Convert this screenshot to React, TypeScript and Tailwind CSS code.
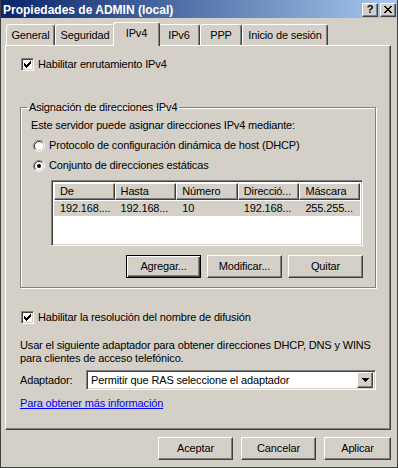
import React from "react";

const raised =
  "border-t border-l border-t-white border-l-white border-r border-b border-r-[#404040] border-b-[#404040] shadow-[inset_-1px_-1px_0_#808080]";
const sunken =
  "border border-t-[#808080] border-l-[#808080] border-b-white border-r-white shadow-[inset_1px_1px_0_#404040,inset_-1px_-1px_0_#d4d0c8]";

function CheckBox() {
  return (
    <div className={`w-[13px] h-[13px] bg-white shrink-0 flex items-center justify-center ${sunken}`}>
      <svg width="7" height="7" viewBox="0 0 7 7" shapeRendering="crispEdges">
        <rect x="6" y="0" width="1" height="1" fill="#000" />
        <rect x="5" y="1" width="2" height="1" fill="#000" />
        <rect x="0" y="2" width="1" height="1" fill="#000" />
        <rect x="4" y="2" width="3" height="1" fill="#000" />
        <rect x="0" y="3" width="2" height="1" fill="#000" />
        <rect x="3" y="3" width="3" height="1" fill="#000" />
        <rect x="0" y="4" width="5" height="1" fill="#000" />
        <rect x="1" y="5" width="3" height="1" fill="#000" />
        <rect x="2" y="6" width="1" height="1" fill="#000" />
      </svg>
    </div>
  );
}

function Radio({ checked }: { checked?: boolean }) {
  return (
    <svg width="12" height="12" viewBox="0 0 12 12" className="shrink-0">
      <circle cx="6" cy="6" r="4.5" fill="#fff" />
      <path d="M2.11 9.89 A5.5 5.5 0 0 1 9.89 2.11" stroke="#808080" fill="none" />
      <path d="M2.82 9.18 A4.5 4.5 0 0 1 9.18 2.82" stroke="#404040" fill="none" />
      <path d="M9.89 2.11 A5.5 5.5 0 0 1 2.11 9.89" stroke="#fff" fill="none" />
      <path d="M9.18 2.82 A4.5 4.5 0 0 1 2.82 9.18" stroke="#d4d0c8" fill="none" />
      {checked && <circle cx="6" cy="6" r="2" fill="#000" />}
    </svg>
  );
}

function Btn({ label, def, w = "w-[75px]" }: { label: string; def?: boolean; w?: string }) {
  if (def) {
    return (
      <div className={`${w} h-[23px] border border-black flex`}>
        <div className="flex-1 flex items-center justify-center shadow-[inset_1px_1px_0_#fff,inset_-1px_-1px_0_#404040,inset_-2px_-2px_0_#808080]">
          {label}
        </div>
      </div>
    );
  }
  return (
    <div className={`${w} h-[23px] flex items-center justify-center ${raised}`}>{label}</div>
  );
}

function Tab({ label, w, selected }: { label: string; w: string; selected?: boolean }) {
  if (selected) {
    return (
      <div className={`${w} h-[24px] -mx-[2px] -mb-[1px] relative z-10 bg-[#d4d0c8] rounded-t-[3px] border-t border-l border-t-white border-l-white border-r border-r-[#404040] shadow-[inset_-1px_0_0_#808080] flex items-center justify-center pb-[2px]`}>
        {label}
      </div>
    );
  }
  return (
    <div className={`${w} h-[21px] rounded-t-[3px] border-t border-l border-t-white border-l-white border-r border-r-[#404040] shadow-[inset_-1px_0_0_#808080] flex items-center justify-center`}>
      {label}
    </div>
  );
}

const cols = [
  { h: "De", v: "192.168....", w: "w-[61px]" },
  { h: "Hasta", v: "192.168...", w: "w-[62px]" },
  { h: "Número", v: "10", w: "w-[62px]" },
  { h: "Direcció...", v: "192.168...", w: "w-[62px]" },
  { h: "Máscara", v: "255.255...", w: "w-[61px]" },
];

export default function App() {
  return (
    <div className="w-[398px] h-[468px] bg-[#d4d0c8] border-l border-r border-b border-[#404040] flex flex-col font-['Liberation_Sans',sans-serif] text-[11px] leading-[13px] tracking-[-0.15px] text-black overflow-hidden">
      {/* Title bar */}
      <div className="h-[18px] shrink-0 bg-[linear-gradient(to_right,#0a246a,#a6caf0)] flex items-center pl-[2px] pr-[1px]">
        <div className="flex-1 text-white font-bold text-[12px] leading-[14px] pt-[1px] tracking-normal">Propiedades de ADMIN (local)</div>
        <div className="flex gap-[2px] mt-[1px]">
          <div className={`w-[16px] h-[14px] bg-[#d4d0c8] flex items-center justify-center font-bold text-[11px] leading-[11px] ${raised}`}>
            ?
          </div>
          <div className={`w-[16px] h-[14px] bg-[#d4d0c8] flex items-center justify-center ${raised}`}>
            <svg width="8" height="7" viewBox="0 0 8 7" shapeRendering="crispEdges">
              <path d="M0 0h2v1h-2zM6 0h2v1h-2zM1 1h2v1h-2zM5 1h2v1h-2zM2 2h4v1h-4zM3 3h2v1h-2zM2 4h4v1h-4zM1 5h2v1h-2zM5 5h2v1h-2zM0 6h2v1h-2zM6 6h2v1h-2z" fill="#000" />
            </svg>
          </div>
        </div>
      </div>

      {/* Tabs */}
      <div className="flex items-end pl-[5px] mt-[4px] h-[23px] shrink-0">
        <Tab label="General" w="w-[49px]" />
        <Tab label="Seguridad" w="w-[60px]" />
        <Tab label="IPv4" w="w-[47px]" selected />
        <Tab label="IPv6" w="w-[42px]" />
        <Tab label="PPP" w="w-[42px]" />
        <Tab label="Inicio de sesión" w="w-[86px]" />
      </div>

      {/* Panel */}
      <div className="ml-[4px] w-[386px] h-[385px] shrink-0 border-t border-l border-t-white border-l-white border-r border-b border-r-[#404040] border-b-[#404040] shadow-[inset_-1px_-1px_0_#808080] flex flex-col pl-[14px]">
        <div className="mt-[12px] flex items-center gap-[4px] pl-[1px] h-[13px]">
          <CheckBox />
          <span>Habilitar enrutamiento IPv4</span>
        </div>

        <fieldset className="mt-[30px] w-[356px] border border-[#808080] shadow-[1px_1px_0_#fff,inset_1px_1px_0_#fff] p-0 m-0">
          <legend className="ml-[6px] px-[2px] leading-[13px]">Asignación de direcciones IPv4</legend>
          <div className="flex flex-col pl-[10px] pr-[11px] pb-[9px]">
            <div className="mt-[5px] h-[13px]">Este servidor puede asignar direcciones IPv4 mediante:</div>
            <div className="mt-[7px] flex items-center gap-[4px] pl-[2px] h-[13px]">
              <Radio />
              <span>Protocolo de configuración dinámica de host (DHCP)</span>
            </div>
            <div className="mt-[7px] flex items-center gap-[4px] pl-[2px] h-[13px]">
              <Radio checked />
              <span>Conjunto de direcciones estáticas</span>
            </div>
            <div className={`mt-[8px] ml-[20px] w-[312px] h-[66px] bg-white flex flex-col p-[2px] ${sunken}`}>
              <div className="flex h-[17px] shrink-0">
                {cols.map((c) => (
                  <div key={c.h} className={`${c.w} h-[17px] bg-[#d4d0c8] flex items-center pl-[5px] ${raised}`}>
                    {c.h}
                  </div>
                ))}
              </div>
              <div className="flex h-[15px] bg-[#d4d0c8] mt-[1px]">
                {cols.map((c) => (
                  <div key={c.h} className={`${c.w} flex items-center pl-[6px]`}>
                    {c.v}
                  </div>
                ))}
              </div>
            </div>
            <div className="mt-[9px] flex justify-end gap-[6px] pr-[1px]">
              <Btn label="Agregar..." def />
              <Btn label="Modificar..." />
              <Btn label="Quitar" />
            </div>
          </div>
        </fieldset>

        <div className="mt-[23px] flex items-center gap-[4px] pl-[1px] h-[13px]">
          <CheckBox />
          <span>Habilitar la resolución del nombre de difusión</span>
        </div>

        <div className="mt-[15px] leading-[13px]">
          Usar el siguiente adaptador para obtener direcciones DHCP, DNS y WINS
          <br />
          para clientes de acceso telefónico.
        </div>

        <div className="mt-[5px] flex items-center h-[20px]">
          <span className="w-[66px]">Adaptador:</span>
          <div className={`w-[290px] h-[20px] bg-white flex items-center p-[2px] ${sunken}`}>
            <span className="flex-1 pl-[2px]">Permitir que RAS seleccione el adaptador</span>
            <div className={`w-[16px] h-[16px] bg-[#d4d0c8] flex items-center justify-center ${raised}`}>
              <svg width="7" height="4" viewBox="0 0 7 4" shapeRendering="crispEdges">
                <path d="M0 0h7v1h-7zM1 1h5v1h-5zM2 2h3v1h-3zM3 3h1v1h-1z" fill="#000" />
              </svg>
            </div>
          </div>
        </div>

        <div className="mt-[7px] h-[13px]">
          <span className="text-[#0000ff] underline">Para obtener más información</span>
        </div>
      </div>

      {/* Dialog buttons */}
      <div className="mt-[7px] flex justify-end gap-[8px] pr-[6px]">
        <Btn label="Aceptar" />
        <Btn label="Cancelar" />
        <Btn label="Aplicar" w="w-[67px]" />
      </div>
    </div>
  );
}
